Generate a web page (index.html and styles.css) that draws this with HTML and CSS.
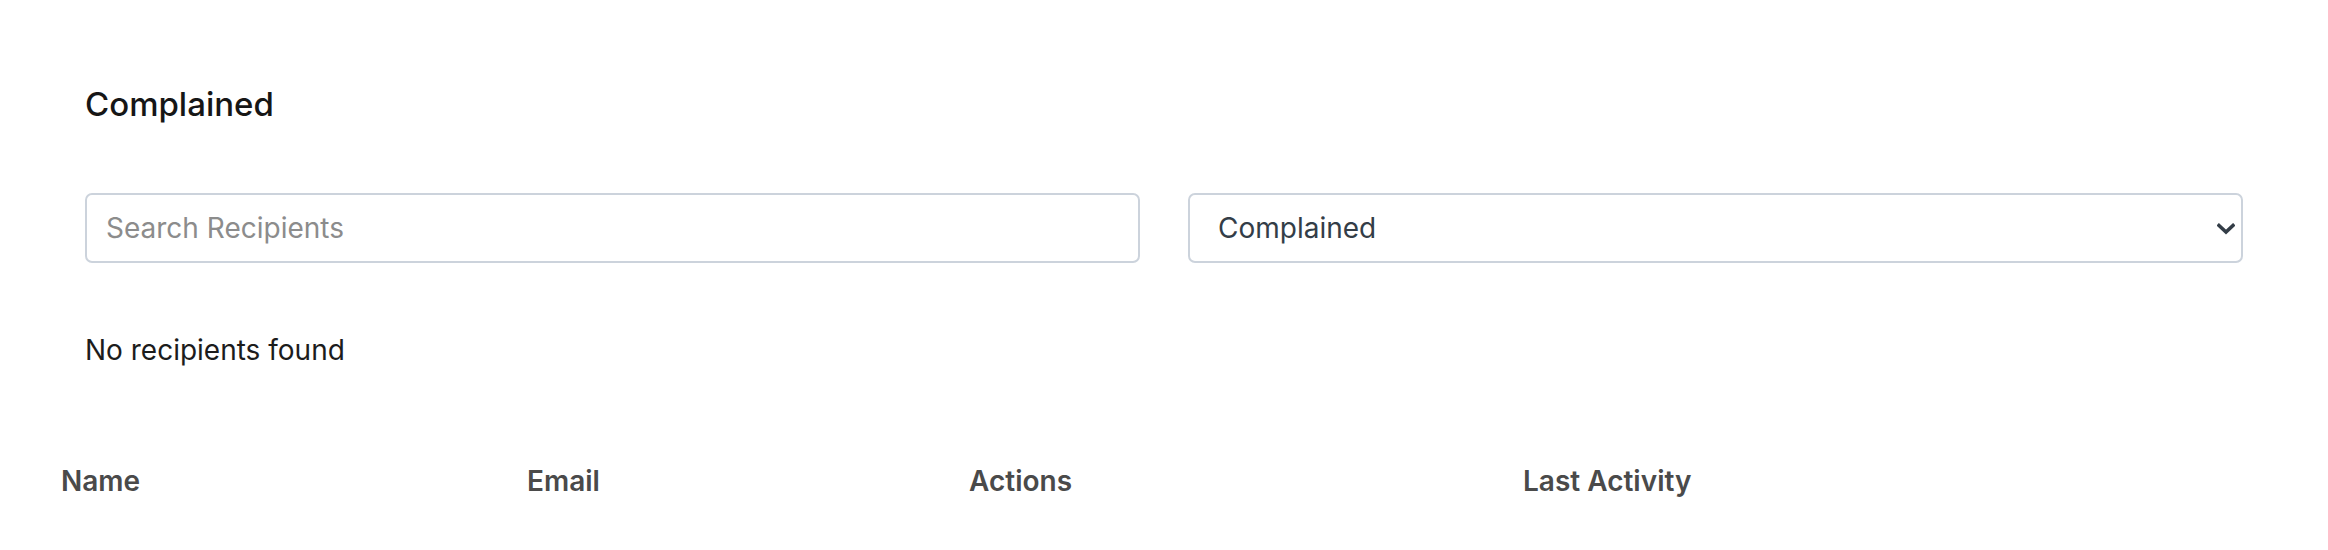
FILE: index.html
```html
<!DOCTYPE html>
<html lang="en">
<head>
    <meta charset="UTF-8">
    <meta name="viewport" content="width=device-width, initial-scale=1.0">
    <title>Complained Recipients</title>
    <link rel="stylesheet" href="styles.css">
</head>
<body>
    <div class="container">
        <h1>Complained</h1>
        <div class="filters">
            <input type="text" class="search" placeholder="Search Recipients">
            <div class="select-wrap">
                <select class="status">
                    <option>All</option>
                    <option>Delivered</option>
                    <option>Bounced</option>
                    <option selected>Complained</option>
                </select>
                <svg class="chevron" viewBox="0 0 18 12" width="18" height="12">
                    <path d="M2 2.5 L9 9 L16 2.5" fill="none" stroke="#333d47" stroke-width="3.6" stroke-linecap="square"/>
                </svg>
            </div>
        </div>
        <p class="empty">No recipients found</p>
    </div>
    <div class="table-container">
        <table id="recipients-table">
            <thead>
                <tr>
                    <th class="col-name">Name</th>
                    <th class="col-email">Email</th>
                    <th class="col-actions">Actions</th>
                    <th>Last Activity</th>
                </tr>
            </thead>
            <tbody></tbody>
        </table>
    </div>
</body>
</html>
```

FILE: styles.css
```css
body {
    font-family: Inter, "Noto Sans", sans-serif;
    background-color: #fff;
    color: #1c1c1c;
    margin: 0;
    padding: 0;
}
.container {
    padding: 84px 85px 0;
}
h1 {
    margin: 0;
    font-size: 33px;
    line-height: 40px;
    font-weight: 500;
    color: #161616;
}
.filters {
    display: grid;
    grid-template-columns: 1fr 1fr;
    gap: 48px;
    margin-top: 69px;
}
.search, .status {
    width: 100%;
    height: 70px;
    box-sizing: border-box;
    border: 2px solid #ccd3dc;
    border-radius: 7px;
    background: #fff;
    font-family: inherit;
    font-size: 28px;
    outline: none;
}
.search {
    padding: 0 19px;
    color: #333d47;
}
.search::placeholder {
    color: #8c8c8c;
}
.select-wrap {
    position: relative;
}
.status {
    appearance: none;
    -webkit-appearance: none;
    padding: 0 60px 0 28px;
    color: #333d47;
}
.chevron {
    position: absolute;
    right: 8px;
    top: 30px;
    pointer-events: none;
}
.empty {
    margin: 70px 0 0;
    font-size: 28px;
    line-height: 34px;
    color: #1c1c1c;
}
.table-container {
    padding: 85px 40px 0;
}
table {
    width: 100%;
    border-collapse: collapse;
}
table th {
    text-align: left;
    padding: 12px 21px;
    font-size: 28px;
    line-height: 34px;
    font-weight: 600;
    color: #4a4a4a;
}
.col-name {
    width: 424px;
}
.col-email {
    width: 400px;
}
.col-actions {
    width: 512px;
}
```
